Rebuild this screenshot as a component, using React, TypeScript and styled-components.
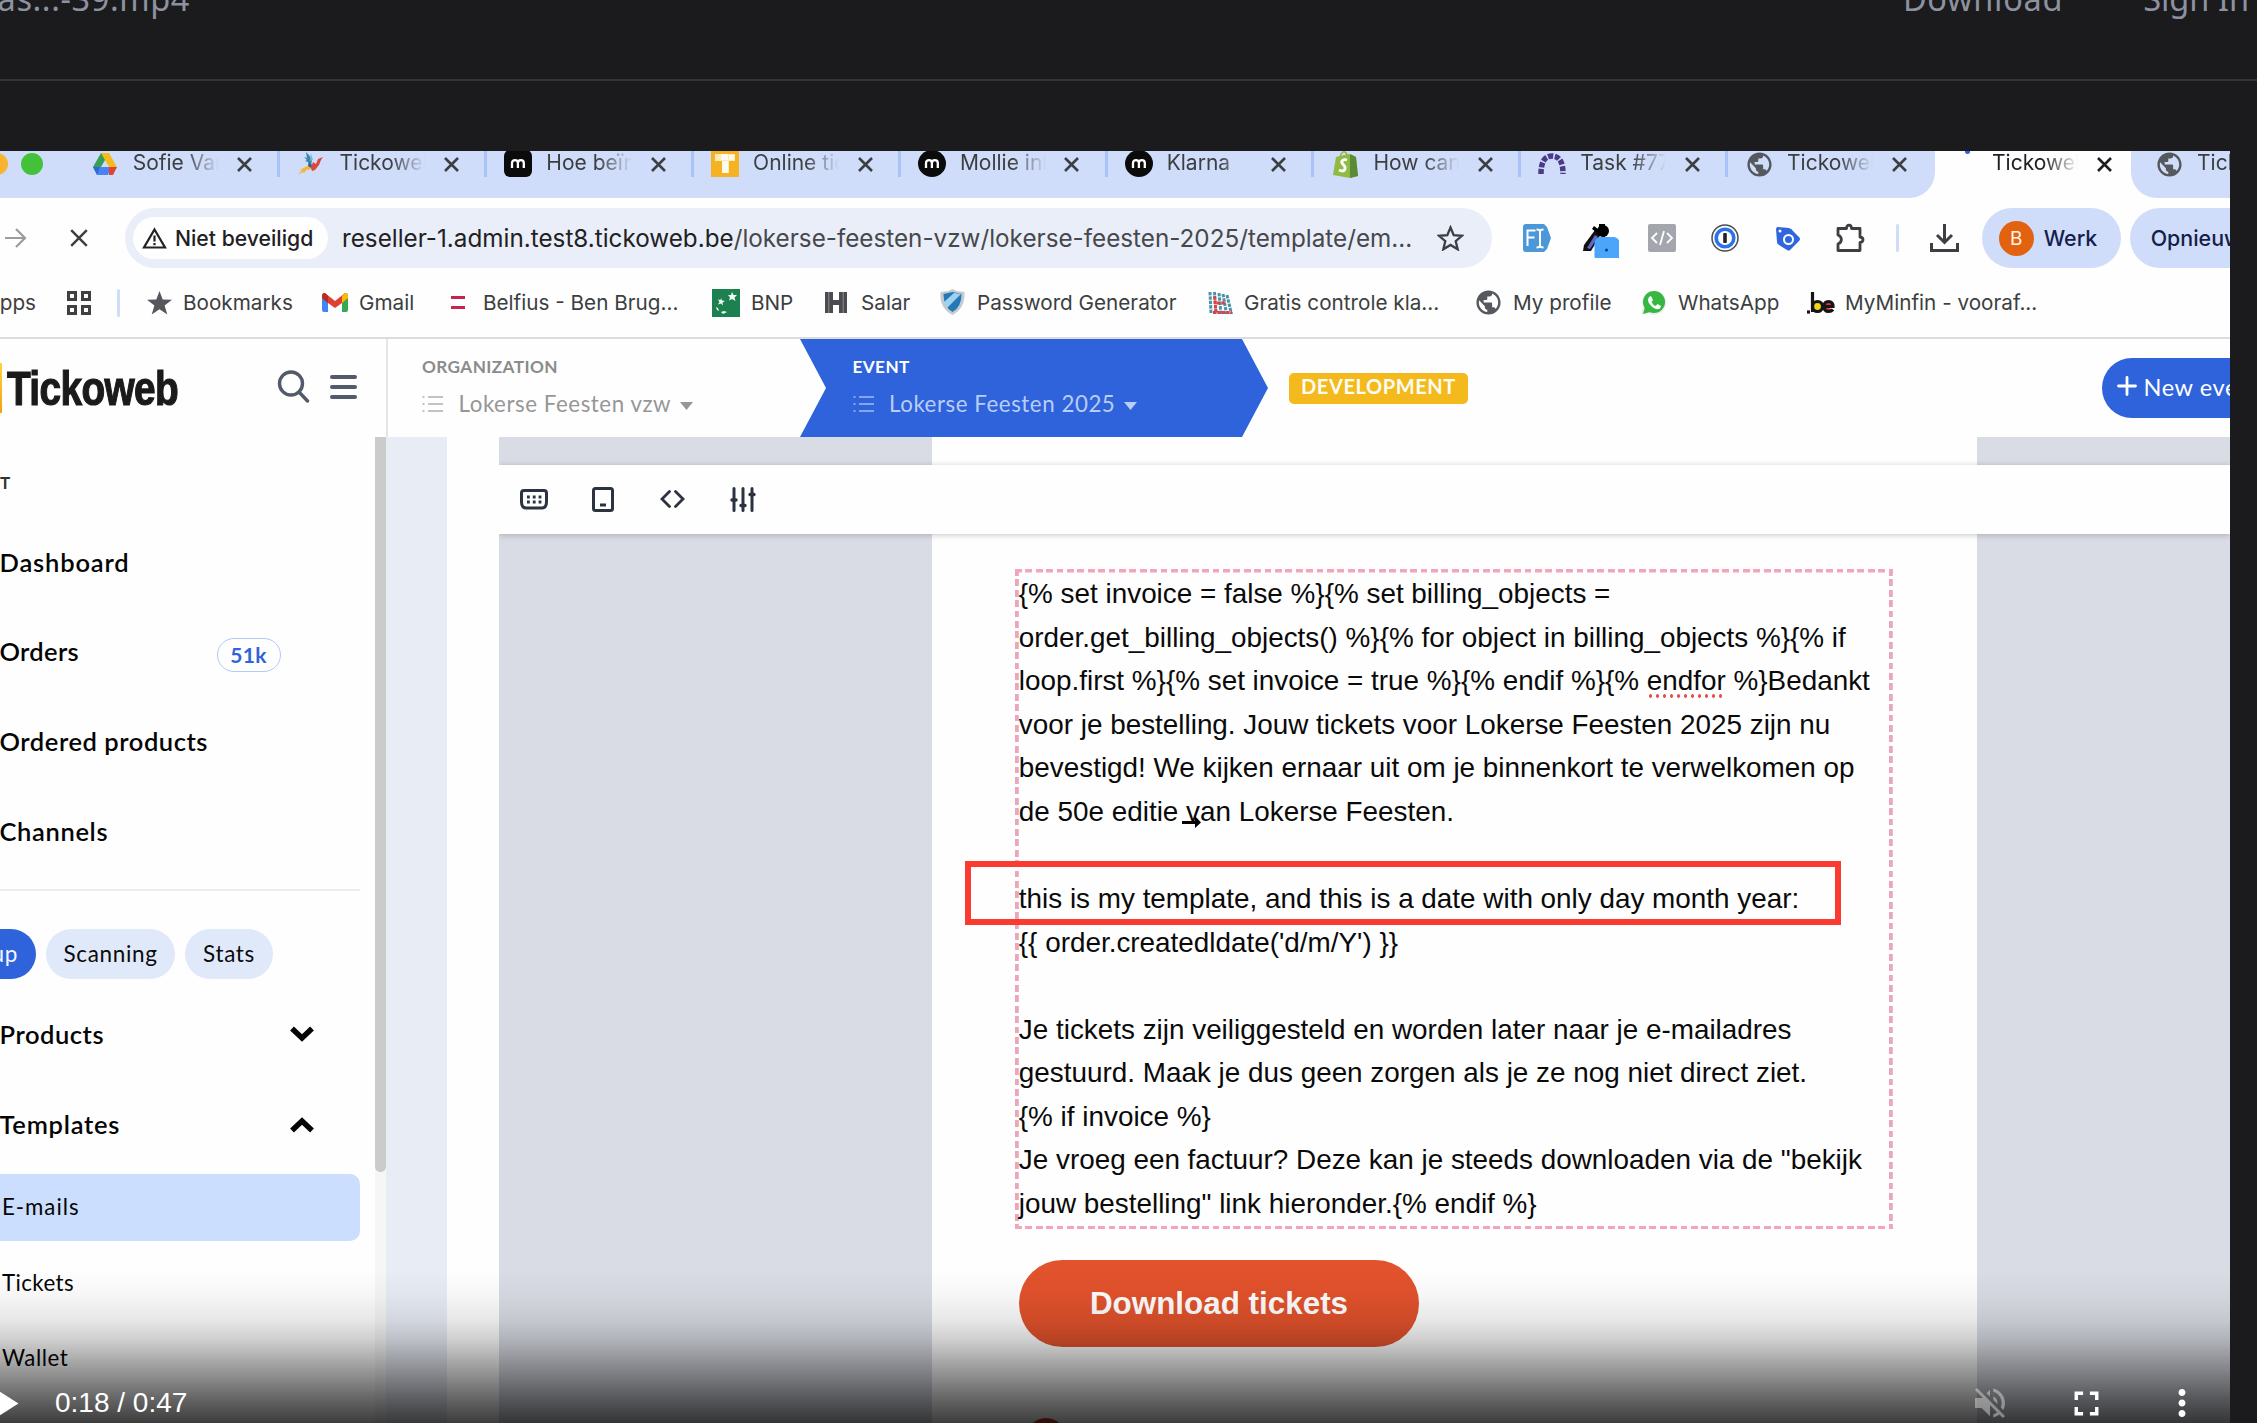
import React from 'react';
import styled, { createGlobalStyle } from 'styled-components';
import { MdPublic, MdVolumeOff, MdFullscreen, MdMoreVert, MdPlayArrow } from 'react-icons/md';

const ui = '"Inter", "Liberation Sans", sans-serif';
const admin = '"Lato", "Noto Sans", sans-serif';
const mail = '"Liberation Sans", Arial, sans-serif';
const blue = '#2e63dc';
const tabBlue = '#cfddfb';

const Global = createGlobalStyle`
  html, body { margin: 0; background: #1b1b1d; }
  body { width: 2257px; height: 1423px; overflow: hidden; }
  * { box-sizing: border-box; }
  svg { display: block; flex: none; }
`;

const Shell = styled.div`
  width: 2257px;
  height: 1423px;
  overflow: hidden;
  background: #1b1b1d;
`;
const SiteHeader = styled.header`
  display: flex;
  justify-content: space-between;
  height: 81px;
  border-bottom: 2px solid #343437;
  font: 400 32.5px/30px "Noto Sans", sans-serif;
  color: #8d92a1;
  white-space: nowrap;
`;
const FileName = styled.div`
  display: flex;
  justify-content: flex-end;
  width: 190px;
  margin-top: -16px;
  letter-spacing: 0.6px;
`;
const SiteLinks = styled.nav`
  display: flex;
  gap: 80px;
  margin: -16px 8px 0 0;
  span:first-child { letter-spacing: 0.7px; }
`;

const Video = styled.main`
  position: relative;
  width: 2230px;
  height: 1272px;
  margin-top: 70px;
  overflow: hidden;
  background: #fefefe;
`;

/* ---- browser chrome ---- */
const Chrome = styled.div`
  height: 188px;
  border-bottom: 2px solid #dcdcdd;
  font-family: ${ui};
  color: #3c3e40;
  white-space: nowrap;
`;
const TabStrip = styled.div`
  display: flex;
  height: 47px;
`;
const TabGroup = styled.div<{ $side: 'left' | 'right' }>`
  display: flex;
  flex: none;
  align-items: flex-start;
  width: ${p => (p.$side === 'left' ? '1935px' : '160px')};
  padding-left: ${p => (p.$side === 'left' ? '0' : '7px')};
  background: ${tabBlue};
  border-radius: ${p => (p.$side === 'left' ? '0 0 26px 0' : '0 0 0 26px')};
`;
const Lights = styled.div`
  display: flex;
  flex: none;
  gap: 13px;
  width: 73.7px;
  margin-top: 2px;
`;
const Light = styled.i<{ $c: string }>`
  width: 22px;
  height: 22px;
  border-radius: 50%;
  background: ${p => p.$c};
  &:first-child { margin-left: -14px; }
`;
const Tab = styled.div<{ $line?: boolean }>`
  display: flex;
  flex: none;
  align-items: center;
  width: 206.8px;
  height: 26px;
  padding-left: 17px;
  border-right: 3.5px solid ${p => (p.$line ? '#a9c3f9' : 'transparent')};
`;
const ActiveTab = styled(Tab)`
  width: 196px;
  padding-left: 15px;
  color: #1e1f21;
`;
const TabIcon = styled.span`
  display: flex;
  justify-content: center;
  align-items: center;
  width: 28px;
  height: 26px;
  margin-right: 14px;
`;
const TabLabel = styled.span`
  width: 86px;
  margin-top: -3px;
  overflow: hidden;
  font-size: 21px;
  line-height: 26px;
  -webkit-mask-image: linear-gradient(90deg, #000 60%, transparent 100%);
  mask-image: linear-gradient(90deg, #000 60%, transparent 100%);
`;
const CloseSlot = styled.span`
  display: flex;
  margin-left: 18.5px;
`;
const Spinner = styled.i`
  width: 5px;
  height: 4px;
  margin: -24px 0 0 6px;
  border-radius: 0 0 3px 3px;
  background: ${blue};
`;

const Toolbar = styled.div`
  display: flex;
  align-items: center;
  height: 80px;
`;
const Forward = styled.span`
  width: 22px;
  margin: 0 43px 0 5px;
`;
const Stop = styled.span`
  width: 18px;
  margin-right: 37px;
`;
const AddressBar = styled.div`
  display: flex;
  flex: none;
  align-items: center;
  width: 1367px;
  height: 60px;
  padding: 0 28px 0 8px;
  border-radius: 30px;
  background: #e9eef8;
`;
const SecurityChip = styled.div`
  display: flex;
  flex: none;
  align-items: center;
  gap: 8px;
  width: 195px;
  height: 42px;
  padding-left: 9px;
  border-radius: 21px;
  background: #fefefe;
  font-size: 21.2px;
  font-weight: 500;
  color: #1f2022;
`;
const Url = styled.div`
  flex: 1;
  margin-left: 14px;
  font-size: 24.26px;
  color: #46484c;
  b { font-weight: 400; color: #1f2124; }
`;
const Extensions = styled.div`
  display: flex;
  flex: none;
  margin-left: 13.6px;
`;
const ExtSlot = styled.span`
  display: flex;
  justify-content: center;
  align-items: center;
  width: 62.7px;
  height: 44px;
`;
const Divider = styled.i<{ $h: number }>`
  flex: none;
  width: 3px;
  height: ${p => p.$h}px;
  border-radius: 2px;
  background: ${tabBlue};
`;
const DownloadSlot = styled.span`
  margin: 0 23px 0 31px;
`;
const ProfilePill = styled.div`
  display: flex;
  flex: none;
  align-items: center;
  gap: 10px;
  width: 139px;
  height: 60px;
  padding-left: 17px;
  border-radius: 30px;
  background: ${tabBlue};
  font-size: 21.4px;
  font-weight: 500;
  color: #14204a;
`;
const Avatar = styled.span`
  display: flex;
  align-items: center;
  justify-content: center;
  width: 35px;
  height: 35px;
  border-radius: 50%;
  background: #e2620f;
  color: #fff4e8;
  font-size: 19px;
  font-weight: 400;
`;
const RestartPill = styled(ProfilePill)`
  width: 160px;
  margin-left: 9px;
  padding-left: 21px;
`;

const Bookmarks = styled.div`
  display: flex;
  align-items: center;
  height: 49px;
  font-size: 20.7px;
`;
const AppsLabel = styled.span`
  display: flex;
  justify-content: flex-end;
  width: 36px;
`;
const Grid4 = styled.span`
  display: grid;
  grid-template-columns: 10px 10px;
  gap: 4px;
  margin: 0 26px 0 31px;
  i { height: 10px; border: 3px solid #3e4042; }
`;
const Bookmark = styled.span<{ $w: number; $gap: number }>`
  display: flex;
  flex: none;
  align-items: center;
  gap: ${p => p.$gap}px;
  width: ${p => p.$w}px;
`;

/* ---- admin application ---- */
const AdminApp = styled.div`
  display: flex;
  height: 1084px;
  font-family: ${admin};
`;
const Sidebar = styled.aside`
  flex: none;
  width: 386px;
`;
const Brand = styled.div`
  display: flex;
  align-items: center;
  height: 98px;
`;
const BrandMark = styled.i`
  width: 1.5px;
  height: 50px;
  background: linear-gradient(#fcd634, #f5a010);
`;
const BrandName = styled.span`
  width: 270px;
  margin-left: 5px;
  font: 700 48.5px/60px ${mail};
  letter-spacing: -0.8px;
  -webkit-text-stroke: 1.2px #1a1a1a;
  transform: scaleX(0.8);
  transform-origin: 0 50%;
  color: #1a1a1a;
`;
const SearchIcon = styled.svg`
  margin-top: -3px;
`;
const Burger = styled.span`
  display: flex;
  flex-direction: column;
  gap: 6px;
  width: 27px;
  margin-left: 20px;
  margin-top: -3px;
  i { height: 4px; border-radius: 2px; background: #535a69; }
`;
const SideScroll = styled.div`
  display: flex;
  height: 986px;
`;
const SideNav = styled.div`
  width: 375px;
  color: #050505;
`;
const ScrollTrack = styled.div`
  width: 11px;
  background: #f6f6f6;
`;
const ScrollThumb = styled.div`
  height: 735px;
  border-radius: 0 0 6px 6px;
  background: #cbcbcb;
`;
const SectionLabel = styled.div`
  height: 79.4px;
  padding-top: 11.5px;
  font-size: 17px;
  font-weight: 700;
  line-height: 68px;
  color: #333;
`;
const NavRow = styled.div<{ $w: number; $ls?: number }>`
  display: flex;
  align-items: center;
  height: 89.7px;
  padding-top: 1px;
  font-size: 25.5px;
  font-weight: 600;
  letter-spacing: ${p => p.$ls ?? 0.55}px;
  > span:first-child { width: ${p => p.$w}px; margin-left: -0.5px; white-space: nowrap; }
  > svg { margin-top: 2px; }
`;
const Count = styled.span`
  display: flex;
  align-items: center;
  justify-content: center;
  width: 64px;
  height: 34px;
  margin-top: 7px;
  border: 1.5px solid #b3caf5;
  border-radius: 17px;
  font-size: 21px;
  font-weight: 700;
  color: ${blue};
`;
const Rule = styled.hr`
  width: 360px;
  height: 2px;
  margin: 13.5px 0 38.5px;
  border: 0;
  background: #ececec;
`;
const Chips = styled.div`
  display: flex;
  gap: 10px;
  margin-left: -64px;
  margin-bottom: 9.5px;
`;
const Chip = styled.span<{ $w: number; $active?: boolean }>`
  display: flex;
  align-items: center;
  justify-content: ${p => (p.$active ? 'flex-end' : 'center')};
  width: ${p => p.$w}px;
  height: 50px;
  padding: 0 ${p => (p.$active ? 18 : 0)}px 2px 0;
  border-radius: 25px;
  background: ${p => (p.$active ? blue : '#e0e9fa')};
  color: ${p => (p.$active ? '#f4f8ff' : '#0a0a0a')};
  font-size: 22.5px;
  letter-spacing: 0.65px;
`;
const SubItem = styled.div<{ $active?: boolean; $ls: number }>`
  width: 360px;
  height: 67px;
  margin: 6px 0 8.7px;
  padding-left: 2px;
  border-radius: 0 10px 10px 0;
  background: ${p => (p.$active ? '#cbdefd' : 'transparent')};
  font-size: 22.3px;
  line-height: 66px;
  letter-spacing: ${p => p.$ls}px;
  & + & { margin-top: 0; }
`;

const Main = styled.section`
  flex: none;
  width: 1844px;
`;
const TopNav = styled.div`
  display: flex;
  align-items: center;
  height: 98px;
  border-left: 2px solid #e6e6e6;
`;
const Crumb = styled.div<{ $event?: boolean }>`
  flex: none;
  width: ${p => (p.$event ? 468 : 412)}px;
  height: 98px;
  padding: 15.5px 0 0 ${p => (p.$event ? 52.5 : 34)}px;
  background: ${p => (p.$event ? blue : 'transparent')};
  color: ${p => (p.$event ? '#b9cdf7' : '#969696')};
  clip-path: ${p => (p.$event ? 'polygon(0 0, 442px 0, 468px 49px, 442px 98px, 0 98px, 26px 49px)' : 'none')};
`;
const CrumbTitle = styled.div<{ $event?: boolean }>`
  margin-bottom: 10.5px;
  font-size: 17.2px;
  font-weight: 700;
  line-height: 24px;
  letter-spacing: 0.4px;
  color: ${p => (p.$event ? '#ffffff' : '#8b8b8b')};
`;
const CrumbValue = styled.div`
  display: flex;
  align-items: center;
  font-size: 22.3px;
  line-height: 30px;
  letter-spacing: 0.55px;
  white-space: nowrap;
  svg:first-child { margin-right: 14.5px; }
  svg:last-child { margin: 3px 0 0 9px; }
`;
const EnvBadge = styled.span`
  display: flex;
  flex: none;
  align-items: center;
  justify-content: center;
  width: 179px;
  height: 31px;
  margin-left: 21px;
  padding-bottom: 4px;
  border-radius: 5px;
  background: #f3b91d;
  color: #fffdf4;
  font-size: 20px;
  font-weight: 700;
  letter-spacing: 0.6px;
`;
const NewEvent = styled.span`
  display: flex;
  flex: none;
  align-items: center;
  width: 180px;
  height: 60px;
  margin-left: 634px;
  padding: 0 0 2px 15px;
  border-radius: 30px;
  background: ${blue};
  color: #fff;
  font-size: 23.5px;
  letter-spacing: 0.6px;
  white-space: nowrap;
  svg { margin: -2px 6.5px 0 0; }
`;
const Workspace = styled.div`
  display: flex;
  height: 986px;
`;
const Gutter = styled.div`
  flex: none;
  width: 61px;
  margin-right: 52px;
  background: #e8ecf5;
`;
const Canvas = styled.div`
  display: flex;
  flex-direction: column;
  width: 1731px;
  overflow: hidden;
  background: #d9dce4;
`;
const PageTop = styled.div`
  flex: none;
  width: 1045px;
  height: 27.5px;
  margin-left: 433px;
  background: #fefefe;
`;
const EditorBar = styled.div`
  position: relative;
  display: flex;
  flex: none;
  align-items: center;
  height: 69.5px;
  background: #fefefe;
  box-shadow: 0 1px 6px rgba(0, 0, 0, 0.22);
`;
const ToolSlot = styled.span`
  display: flex;
  justify-content: center;
  width: 69.6px;
`;
const MailPage = styled.article`
  flex: 1;
  width: 1045px;
  margin-left: 433px;
  padding: 35px 0 0 83px;
  background: #fefefe;
  font-family: ${mail};
`;
const dashX = 'repeating-linear-gradient(90deg, #f3a5ba 0 6.8px, transparent 6.8px 10.4px)';
const dashY = 'repeating-linear-gradient(180deg, #eba6b9 0 6.8px, transparent 6.8px 10.4px)';
const TextBlock = styled.div`
  position: relative;
  width: 878px;
  height: 660px;
  padding: 3.3px 0 0 3.8px;
  background:
    ${dashX} 0 0 / 100% 3.5px no-repeat,
    ${dashX} 0 100% / 100% 3.5px no-repeat,
    ${dashY} 0 0 / 3.8px 100% no-repeat,
    ${dashY} 100% 0 / 3.8px 100% no-repeat;
  color: #0a0a0a;
  font-size: 27.87px;
`;
const Line = styled.div`
  height: 43.55px;
  line-height: 43.55px;
  white-space: pre;
`;
const Misspelled = styled.span`
  background: radial-gradient(circle, #e4554f 1.5px, transparent 2px) 0 100% / 7px 4px repeat-x;
  padding-bottom: 2px;
`;
const Highlight = styled.div`
  position: absolute;
  left: -50px;
  top: 292px;
  width: 876px;
  height: 64px;
  border: 6px solid #fb3b30;
`;
const Cursor = styled.svg`
  position: absolute;
  left: 167px;
  top: 246px;
`;
const MailButton = styled.div`
  display: flex;
  align-items: center;
  justify-content: center;
  width: 400px;
  height: 87px;
  margin: 31px 0 71px 4px;
  border-radius: 43.5px;
  background: #e2522c;
  color: #fff;
  font-size: 31.4px;
  font-weight: 700;
`;
const RedDot = styled.div`
  width: 40px;
  height: 40px;
  margin-left: 11px;
  border-radius: 50%;
  background: #d2321c;
`;

/* ---- player controls ---- */
const Shade = styled.div`
  position: absolute;
  left: 0;
  right: 0;
  bottom: 0;
  height: 153px;
  background: linear-gradient(
    rgba(0,0,0,0) 0, rgba(0,0,0,.03) 25px, rgba(0,0,0,.09) 50px, rgba(0,0,0,.19) 70px,
    rgba(0,0,0,.33) 90px, rgba(0,0,0,.47) 110px, rgba(0,0,0,.61) 130px, rgba(0,0,0,.76) 153px);
`;
const Controls = styled.div`
  position: absolute;
  left: 0;
  right: 0;
  bottom: 0;
  display: flex;
  align-items: center;
  height: 40px;
  color: #fff;
  font: 400 28px/40px ${mail};
`;
const PlaySlot = styled.span`
  margin: 0 28.5px 0 -14.5px;
`;
const Time = styled.span`
  flex: 1;
`;
const ControlSlot = styled.span<{ $dim?: boolean }>`
  display: flex;
  justify-content: center;
  width: 96px;
  opacity: ${p => (p.$dim ? 0.38 : 1)};
`;

/* ---- drawings ---- */
const Cross = ({ s = 15, w = 2.6 }: { s?: number; w?: number }) => (
  <svg width={s} height={s} viewBox="0 0 15 15" stroke="currentColor" strokeWidth={w}><path d="M1 1l13 13M14 1L1 14" /></svg>
);
const Drive = () => (
  <svg width="26" height="24" viewBox="0 0 26 24">
    <path d="M9 1h8L5 22l-4-7z" fill="#38a056" /><path d="M9 1h8l8 14h-8z" fill="#f7ba1c" />
    <path d="M1 15l4 8h3l4-8z" fill="#2a69dc" /><path d="M8 15h11l-3 8H5z" fill="#4a83f0" /><path d="M17 15h8l-4 8h-4z" fill="#dd4435" />
  </svg>
);
const Bird = () => (
  <svg width="28" height="26" viewBox="0 0 28 26">
    <path d="M9 1l3 3 3 5-1 6-2-1-1-3-3-1 2-1-3-3 3 1z" fill="#3c87a8" /><path d="M14 2l2 7-3 1z" fill="#79bdd4" />
    <path d="M1 24l4-5-3 .5 8-4.500 5-1 2 2-5 3-2-.5-3 3.500-1-1z" fill="#f2b73c" />
    <path d="M14 17l2-6 3 2 2-5 5-2-2 3-2 5-4 5-3 1z" fill="#d9483b" /><path d="M12 11l3 3-1 3-3-2z" fill="#335e9c" />
  </svg>
);
const Mollie = ({ round }: { round?: boolean }) => (
  <svg width="28" height="27" viewBox="0 0 28 27">
    <rect width="28" height="27" y="-1" rx={round ? 14 : 6} fill="#0b0b0b" />
    <path d="M8 17v-5a2.900 2.900 0 0 1 5.900 0V17M13.900 12a2.900 2.900 0 0 1 5.900 0V17" fill="none" stroke="#fff" strokeWidth="2.300" />
  </svg>
);
const YellowT = () => (
  <svg width="28" height="26" viewBox="0 0 28 26"><rect width="28" height="26" fill="#f5b222" /><path d="M4 3h20v7h-6v12h-7V10H4z" fill="#fdeab4" /><path d="M10 3h7v6h-7zM11 10h6v12h-6zM18 4h5v5h-5z" fill="#fffaf0" /></svg>
);
const Shopify = () => (
  <svg width="25" height="27" viewBox="0 0 25 27">
    <path d="M3 6l12-3 4 1 4 2 2 19-8 2L0 24z" fill="#8fba43" /><path d="M17 3l6 3 2 19-8 2z" fill="#5a8a35" />
    <path d="M7 7c0-4 3-7 5-6s2 3 2 4" fill="none" stroke="#8fba43" strokeWidth="1.500" />
    <path d="M14 9c-4-1-6 1-5 3s4 3 3 6-4 2-6 1" fill="none" stroke="#fff" strokeWidth="2.800" />
  </svg>
);
const Arch = () => (
  <svg width="30" height="24" viewBox="0 0 30 24"><path d="M4 22c0-11 3-18 11-18s11 7 11 18" fill="none" stroke="#4c3a87" strokeWidth="5.500" strokeDasharray="5 1.600" /></svg>
);
const Globe = () => <MdPublic size={29} color="#55585c" />;
const Puzzle = () => (
  <svg width="30" height="30" viewBox="0 0 30 30" fill="none" stroke="#3d3f42" strokeWidth="2.800" strokeLinejoin="round">
    <path d="M3 5.500h8.500c0-4.500 5-4.500 5 0H25v8.500c4 .5 4 5 0 5.500v8H3v-6.500c4.500-2 4.500-7 0-9z" />
  </svg>
);
const ListIcon = ({ c }: { c: string }) => (
  <svg width="22" height="18" viewBox="0 0 22 18" stroke={c} strokeWidth="1.600"><path d="M6 2h15M6 9h15M6 16h15M.5 2h2M.5 9h2M.5 16h2" /></svg>
);
const Caret = () => <svg width="13" height="8" viewBox="0 0 13 8"><path d="M0 0h13L6.500 8z" fill="currentColor" /></svg>;
const Chevron = ({ up }: { up?: boolean }) => (
  <svg width="24" height="17" viewBox="0 0 24 17" fill="none" stroke="#050505" strokeWidth="5.500">
    <path d={up ? 'M2 14.500L12 5l10 9.500' : 'M2 2.500L12 12l10-9.500'} />
  </svg>
);

const tabs: [string, React.ReactNode][] = [
  ['Sofie Van', <Drive />],
  ['Tickoweb', <Bird />],
  ['Hoe beïnv', <Mollie />],
  ['Online tick', <YellowT />],
  ['Mollie inlo', <Mollie round />],
  ['Klarna', <Mollie round />],
  ['How can I', <Shopify />],
  ['Task #777', <Arch />],
  ['Tickoweb', <Globe />],
];

const bookmarks: [string, number, number, React.ReactNode][] = [
  ['Bookmarks', 175, 11, <svg width="25" height="24" viewBox="0 0 25 24"><path d="M12.500 0l3.200 8.600 9.300.2-7.400 5.600 2.700 9-7.800-5.200-7.800 5.200 2.700-9L0 8.800l9.300-.2z" fill="#54575b" /></svg>],
  ['Gmail', 129, 11, <svg width="26" height="19" viewBox="0 0 26 19"><path d="M0 3v14q0 2 2 2h4V7z" fill="#4285f4" /><path d="M20 7v12h4q2 0 2-2V3z" fill="#34a853" /><path d="M0 3q0-3 3-3l10 8L23 0q3 0 3 3v2l-6 5-7 5-7-5-6-5z" fill="#e2402f" /><path d="M20 3l3-3q3 0 3 3v2l-6 5z" fill="#fbbc04" /><path d="M0 3q0-3 3-3l3 3v7L0 5z" fill="#b92c23" /></svg>],
  ['Belfius - Ben Brug...', 261, 18, <svg width="14" height="14" viewBox="0 0 14 14"><path d="M0 1.500h14M0 11.500h14" stroke="#c8234a" strokeWidth="3" /></svg>],
  ['BNP', 113, 11, <svg width="28" height="28" viewBox="0 0 28 28"><rect width="28" height="28" fill="#1d8050" /><path d="M20 3l1.500 3 3.500 0-2.500 2.500 1 3.500-3.500-2-3 1.500 1-3-2-2.500h3zM9 9l1 2.500 3 .5-2.500 1.500.5 3-2-2-3 1 1.500-2.500L6 10.500l2.500.5zM4 18l2 1 1 3-2-1zM9 23l3-1 3 1-4 2z" fill="#f0fff6" /></svg>],
  ['Salar', 114, 14, <svg width="22" height="21" viewBox="0 0 22 21"><path d="M0 0h8v8h6V0h8v21h-8v-8H8v8H0z" fill="#4a4c50" /><path d="M3.800 0v21M18.200 0v21" stroke="#8c8e92" strokeWidth="1" /></svg>],
  ['Password Generator', 269, 11, <svg width="27" height="27" viewBox="0 0 27 27"><path d="M13.500 0l4 2 8 1q1 16-12 23Q0 19 1.500 3l8-1z" fill="#c3cbd1" /><path d="M13.500 3l9 2q0 13-9 18-9-5-9-18z" fill="#2777b4" /><path d="M5 13L15 4l7 1L8 19z" fill="#9fd2f0" /></svg>],
  ['Gratis controle kla...', 266, 11, <svg width="25" height="24" viewBox="0 0 25 24" fill="none" strokeDasharray="3.400 1"><path d="M2 1l1 22M6.500 1l1.500 22M11 2l2 21M15 3l3.500 20M19 4l4.500 19" stroke="#4b93a8" strokeWidth="3" /><path d="M6.500 5l1.500 16M5 21.500h19M9 12h9" stroke="#dc4148" strokeWidth="3" /></svg>],
  ['My profile', 166, 10, <Globe />],
  ['WhatsApp', 167, 12, <svg width="26" height="26" viewBox="0 0 26 26"><path d="M1 25l2-8a12 12 0 1 1 5 6z" fill="#e9eee9" /><circle cx="14" cy="12" r="11" fill="#35b742" /><path d="M3 24l2-7 5 5z" fill="#35b742" /><path d="M9 7l2-1 2 4-1.500 2q1.500 3 4 4l2-2 3.500 2-1 2.500q-3 2-7-1-5-4-5-8z" fill="#fff" /></svg>],
  ['MyMinfin - vooraf...', 210, 10, <svg width="28" height="22" viewBox="0 0 28 22" fill="none" stroke="#151515" strokeWidth="3.200"><circle cx="10.500" cy="14.500" r="5" fill="#f5d51b" /><path d="M5.500 0v20" /><path d="M17 14.500h9q0-5-4.500-5t-4.500 5 4.500 5q3 0 4.500-2" fill="#e02b2b" /><path d="M0 20h3" /></svg>],
];

const lines: React.ReactNode[] = [
  '{% set invoice = false %}{% set billing_objects =',
  'order.get_billing_objects() %}{% for object in billing_objects %}{% if',
  <>{'loop.first %}{% set invoice = true %}{% endif %}{% '}<Misspelled>endfor</Misspelled>{' %}Bedankt'}</>,
  'voor je bestelling. Jouw tickets voor Lokerse Feesten 2025 zijn nu',
  'bevestigd! We kijken ernaar uit om je binnenkort te verwelkomen op',
  'de 50e editie van Lokerse Feesten.',
  '',
  'this is my template, and this is a date with only day month year:',
  "{{ order.createdldate('d/m/Y') }}",
  '',
  'Je tickets zijn veiliggesteld en worden later naar je e-mailadres',
  'gestuurd. Maak je dus geen zorgen als je ze nog niet direct ziet.',
  '{% if invoice %}',
  'Je vroeg een factuur? Deze kan je steeds downloaden via de "bekijk',
  'jouw bestelling" link hieronder.{% endif %}',
];

const ExtDivider = styled(Divider).attrs({ $h: 28 })`margin-left: 14px;`;
const BookmarkDivider = styled(Divider).attrs({ $h: 28 })`margin-right: 27px;`;

const BrowserChrome = () => (
  <Chrome>
    <TabStrip>
      <TabGroup $side="left">
        <Lights><Light $c="#f8b42f" /><Light $c="#43c139" /></Lights>
        {tabs.map(([label, icon], i) => (
          <Tab key={i} $line={i < tabs.length - 1}>
            <TabIcon>{icon}</TabIcon>
            <TabLabel>{label}</TabLabel>
            <CloseSlot><Cross /></CloseSlot>
          </Tab>
        ))}
      </TabGroup>
      <ActiveTab>
        <TabIcon><Spinner /></TabIcon>
        <TabLabel>Tickoweb</TabLabel>
        <CloseSlot><Cross /></CloseSlot>
      </ActiveTab>
      <TabGroup $side="right">
        <Tab><TabIcon><Globe /></TabIcon><TabLabel>Tickoweb</TabLabel></Tab>
      </TabGroup>
    </TabStrip>
    <Toolbar>
      <Forward><svg width="22" height="20" viewBox="0 0 22 20" fill="none" stroke="#9a9c9f" strokeWidth="2.200"><path d="M0 10h20M11 1l9 9-9 9" /></svg></Forward>
      <Stop><Cross s={18} w={2} /></Stop>
      <AddressBar>
        <SecurityChip>
          <svg width="25" height="22" viewBox="0 0 25 22" fill="none" stroke="#222" strokeWidth="2.200"><path d="M12.500 2.500L23 20.500H2z" /><path d="M12.500 8.500v6M12.500 16v2.300" /></svg>
          Niet beveiligd
        </SecurityChip>
        <Url><b>reseller-1.admin.test8.tickoweb.be</b>/lokerse-feesten-vzw/lokerse-feesten-2025/template/em...</Url>
        <svg width="27" height="26" viewBox="0 0 27 26" fill="none" stroke="#3d3f42" strokeWidth="2.300"><path d="M13.500 2.500l3.200 7.700 8.300.6-6.300 5.400 2 8.100-7.200-4.400-7.200 4.400 2-8.100L2 10.800l8.300-.6z" /></svg>
      </AddressBar>
      <Extensions>
        <ExtSlot><svg width="28" height="28" viewBox="0 0 28 28"><path d="M3 0h18l3 3 4 11-4 11-3 3H3q-3 0-3-3V3q0-3 3-3z" fill="#4b97d8" /><path d="M4.500 22V6.500h8M4.500 13.500h7M13.500 5.500q3 0 3.500 1.500.5-1.500 3.500-1.500M17 7v15M13.500 23.500q3 0 3.500-1.500.5 1.500 3.500 1.500" fill="none" stroke="#fff" strokeWidth="2" /></svg></ExtSlot>
        <ExtSlot><svg width="38" height="40" viewBox="-1 0 38 40"><path d="M1 33l1-6L13 12l6 4L9 33z" fill="#101010" /><path d="M5 30l8-13 3 2-8 12z" fill="#6268c4" /><circle cx="21" cy="13" r="6" fill="#000" /><path d="M12 8l12 9-2 3-12-9zM17 6h6v4h-6z" fill="#000" /><rect x="12.500" y="19" width="25" height="25" rx="6" fill="#4aa5fb" /><circle cx="24.500" cy="32" r="1.500" fill="#103a70" /></svg></ExtSlot>
        <ExtSlot><svg width="28" height="28" viewBox="0 0 28 28"><rect width="28" height="28" rx="2" fill="#a4a6ae" /><path d="M9 9l-5 5 5 5M19 9l5 5-5 5M16 7l-4 14" fill="none" stroke="#fff" strokeWidth="1.800" /></svg></ExtSlot>
        <ExtSlot><svg width="28" height="28" viewBox="0 0 28 28"><circle cx="14" cy="14" r="13" fill="#fff" stroke="#4b4d51" strokeWidth="1.500" /><circle cx="14" cy="14" r="8.800" fill="#fff" stroke="#2c73ea" strokeWidth="3.600" /><rect x="12.200" y="9" width="3.600" height="10" rx="1" fill="#222" /></svg></ExtSlot>
        <ExtSlot><svg width="26" height="25" viewBox="0 0 26 25"><path d="M2 1l12 1q3 1 4 3l6 6q2 2 0 4l-9 9q-1 1-3 0l-8-5q-2-1-2-3L1 3z" fill="#2f66dd" /><circle cx="13.500" cy="13.500" r="4.500" fill="none" stroke="#fff" strokeWidth="2" /><circle cx="5" cy="5" r="1.500" fill="#fff" /></svg></ExtSlot>
        <ExtSlot><Puzzle /></ExtSlot>
      </Extensions>
      <ExtDivider />
      <DownloadSlot><svg width="29" height="28" viewBox="0 0 29 28" fill="none" stroke="#3d3f42" strokeWidth="3"><path d="M14.500 0v18M7 11l7.500 7.500L22 11M1.500 19v7.500h26V19" /></svg></DownloadSlot>
      <ProfilePill><Avatar>B</Avatar>Werk</ProfilePill>
      <RestartPill>Opnieuw</RestartPill>
    </Toolbar>
    <Bookmarks>
      <AppsLabel>Apps</AppsLabel>
      <Grid4><i /><i /><i /><i /></Grid4>
      <BookmarkDivider />
      {bookmarks.map(([label, w, gap, icon]) => (
        <Bookmark key={label} $w={w} $gap={gap}>{icon}<span>{label}</span></Bookmark>
      ))}
    </Bookmarks>
  </Chrome>
);

const SideMenu = () => (
  <Sidebar>
    <Brand>
      <BrandMark />
      <BrandName>Tickoweb</BrandName>
      <SearchIcon width="33" height="33" viewBox="0 0 33 33" fill="none" stroke="#535a69" strokeWidth="3.400" strokeLinecap="round"><circle cx="14" cy="13.500" r="11.500" /><path d="M22 22l8.500 9" /></SearchIcon>
      <Burger><i /><i /><i /></Burger>
    </Brand>
    <SideScroll>
      <SideNav>
        <SectionLabel>T</SectionLabel>
        <NavRow $w={217} $ls={0.85}><span>Dashboard</span></NavRow>
        <NavRow $w={217} $ls={0.3}><span>Orders</span><Count>51k</Count></NavRow>
        <NavRow $w={217}><span>Ordered products</span></NavRow>
        <NavRow $w={217} $ls={0.65}><span>Channels</span></NavRow>
        <Rule />
        <Chips>
          <Chip $w={100} $active>Setup</Chip>
          <Chip $w={129}>Scanning</Chip>
          <Chip $w={88}>Stats</Chip>
        </Chips>
        <NavRow $w={290}><span>Products</span><Chevron /></NavRow>
        <NavRow $w={290} $ls={0.75}><span>Templates</span><Chevron up /></NavRow>
        <SubItem $active $ls={0.95}>E-mails</SubItem>
        <SubItem $ls={0.4}>Tickets</SubItem>
        <SubItem $ls={0.5}>Wallet</SubItem>
      </SideNav>
      <ScrollTrack><ScrollThumb /></ScrollTrack>
    </SideScroll>
  </Sidebar>
);

const Editor = () => (
  <Canvas>
    <PageTop />
    <EditorBar>
      <ToolSlot><svg width="28" height="21" viewBox="0 0 28 21"><path d="M4 1.500h20q2.500 0 2.500 2.500v9q0 6-5 6h-15q-5 0-5-6V4q0-2.500 2.500-2.500z" fill="none" stroke="#2b3240" strokeWidth="3" /><path d="M7 8h15M7 13h15" stroke="#2b3240" strokeWidth="2.800" strokeDasharray="2.800 3" /></svg></ToolSlot>
      <ToolSlot><svg width="22" height="25" viewBox="0 0 22 25" fill="none" stroke="#2b3240" strokeWidth="3"><rect x="1.500" y="1.500" width="19" height="22" rx="2" /><path d="M8 18h6" /></svg></ToolSlot>
      <ToolSlot><svg width="25" height="18" viewBox="0 0 25 18" fill="none" stroke="#2b3240" strokeWidth="2.800" strokeLinecap="round"><path d="M9.500 1.500L2 9l7.500 7.500M15.500 1.500L23 9l-7.500 7.500" /></svg></ToolSlot>
      <ToolSlot><svg width="26" height="25" viewBox="0 0 26 25" fill="none" stroke="#2b3240" strokeWidth="3" strokeLinecap="round"><path d="M4 1.500v22M13 1.500v22M22 1.500v22" /><path d="M2 13h4M11 18.500h4M20 7.500h4" strokeWidth="3.400" /></svg></ToolSlot>
    </EditorBar>
    <MailPage>
      <TextBlock>
        {lines.map((line, i) => <Line key={i}>{line}</Line>)}
        <Highlight />
        <Cursor width="20" height="14" viewBox="0 0 20 14"><path d="M0 6h13V1l6 6.500L13 13V9H0z" fill="#000" /></Cursor>
      </TextBlock>
      <MailButton>Download tickets</MailButton>
      <RedDot />
    </MailPage>
  </Canvas>
);

export default function App() {
  return (
    <Shell>
      <Global />
      <SiteHeader>
        <FileName>cas...-39.mp4</FileName>
        <SiteLinks><span>Download</span><span>Sign In</span></SiteLinks>
      </SiteHeader>
      <Video>
        <BrowserChrome />
        <AdminApp>
          <SideMenu />
          <Main>
            <TopNav>
              <Crumb>
                <CrumbTitle>ORGANIZATION</CrumbTitle>
                <CrumbValue><ListIcon c="#b0b0b0" />Lokerse Feesten vzw<Caret /></CrumbValue>
              </Crumb>
              <Crumb $event>
                <CrumbTitle $event>EVENT</CrumbTitle>
                <CrumbValue><ListIcon c="#a3bdf3" />Lokerse Feesten 2025<Caret /></CrumbValue>
              </Crumb>
              <EnvBadge>DEVELOPMENT</EnvBadge>
              <NewEvent><svg width="20" height="20" viewBox="0 0 20 20" stroke="#fff" strokeWidth="2.800" strokeLinecap="round"><path d="M10 1.500v17M1.500 10h17" /></svg>New event</NewEvent>
            </TopNav>
            <Workspace>
              <Gutter />
              <Editor />
            </Workspace>
          </Main>
        </AdminApp>
        <Shade />
        <Controls>
          <PlaySlot><MdPlayArrow size={41} /></PlaySlot>
          <Time>0:18 / 0:47</Time>
          <ControlSlot $dim><MdVolumeOff size={40} /></ControlSlot>
          <ControlSlot><MdFullscreen size={41} /></ControlSlot>
          <ControlSlot><MdMoreVert size={42} /></ControlSlot>
        </Controls>
      </Video>
    </Shell>
  );
}
